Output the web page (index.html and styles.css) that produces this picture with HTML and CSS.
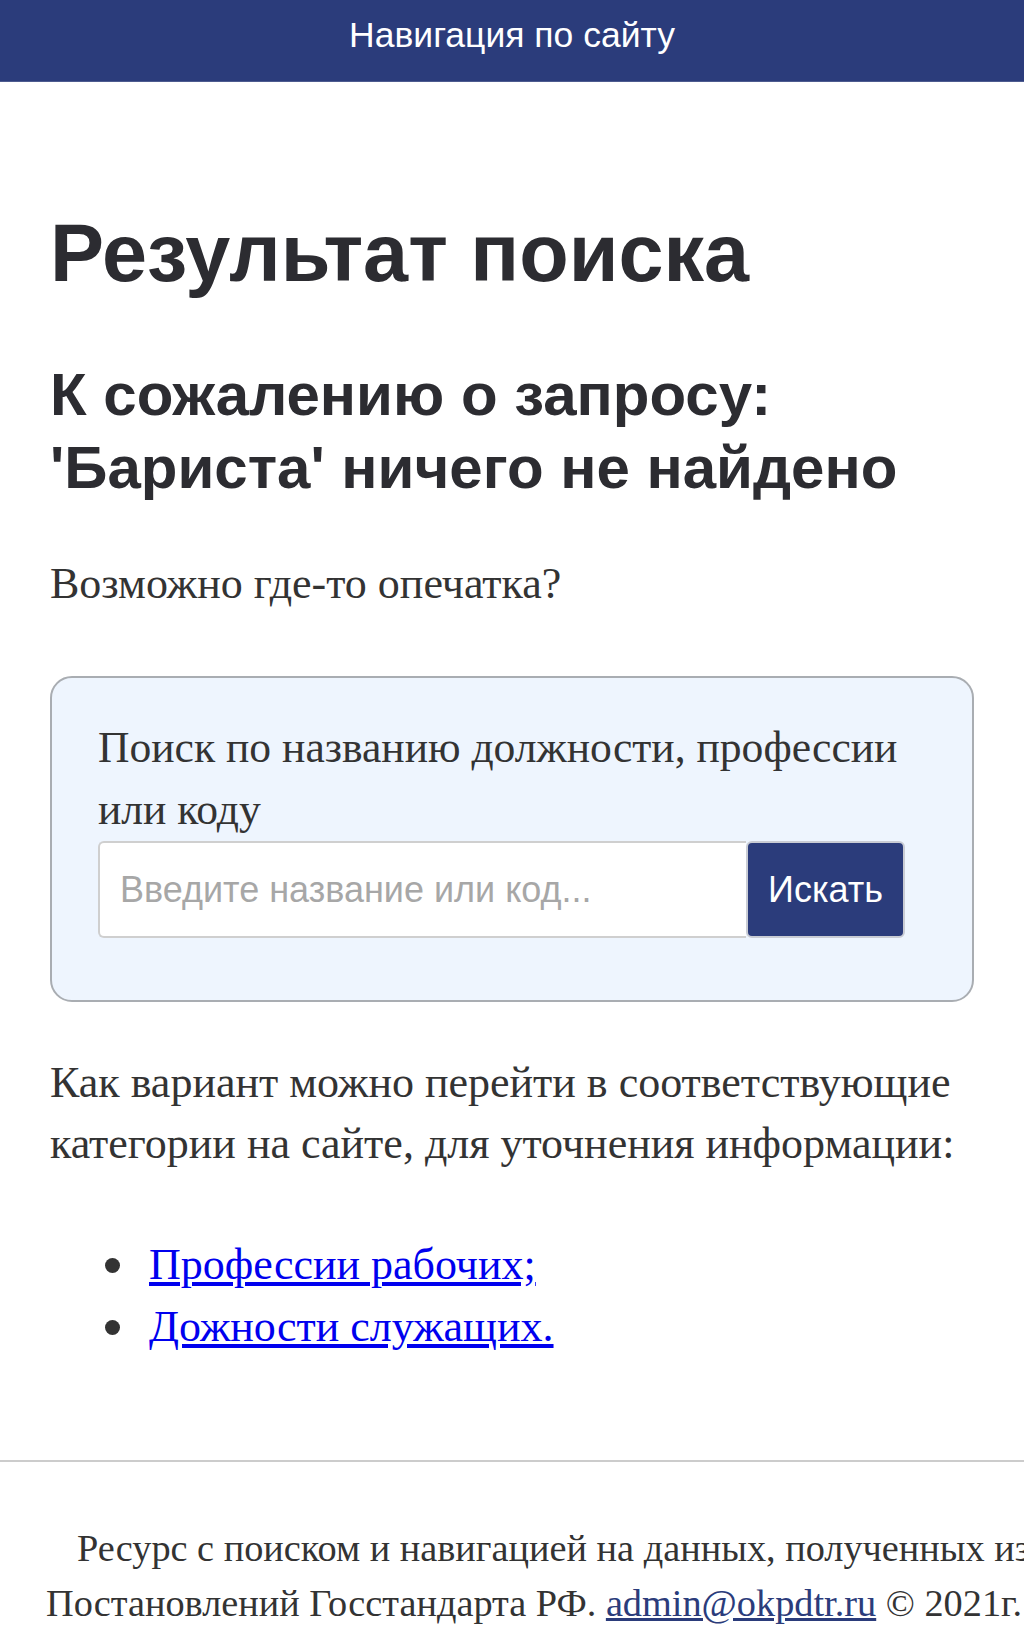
FILE: index.html
```html
<!DOCTYPE html>
<html lang="ru">
<head>
<meta charset="utf-8">
<title>Результат поиска</title>
<link rel="stylesheet" href="styles.css">
</head>
<body>
<header class="nav">Навигация по сайту</header>
<main class="content">
  <h1 class="title">Результат поиска</h1>
  <h2 class="subtitle">К сожалению о запросу:<br>'Бариста' ничего не найдено</h2>
  <p class="text">Возможно где-то опечатка?</p>
  <form class="search-box">
    <label class="search-label" for="q">Поиск по названию должности, профессии или коду</label>
    <div class="search-row">
      <input id="q" class="search-input" type="text" placeholder="Введите название или код...">
      <button class="search-btn" type="button">Искать</button>
    </div>
  </form>
  <p class="text text-after">Как вариант можно перейти в соответствующие категории на сайте, для уточнения информации:</p>
  <ul class="links">
    <li><a href="#">Профессии рабочих;</a></li>
    <li><a href="#">Дожности служащих.</a></li>
  </ul>
</main>
<footer class="footer">
  <p class="footer-text">Ресурс с поиском и навигацией на данных, полученных из Постановлений Госстандарта РФ. <a class="footer-link" href="#">admin@okpdtr.ru</a> © 2021г.</p>
</footer>
</body>
</html>
```

FILE: styles.css
```css
html, body {
  margin: 0;
  padding: 0;
  overflow-x: hidden;
  background: #ffffff;
}
body {
  font-family: "Liberation Serif", serif;
  color: #333333;
}
.nav {
  background: #2b3c7b;
  color: #ffffff;
  font-family: "Liberation Sans", Arial, sans-serif;
  font-size: 35.5px;
  line-height: 48px;
  text-align: center;
  padding: 11px 0 22px;
  border-bottom: 1px solid #4d5b8f;
  box-sizing: border-box;
  height: 82px;
}
.content {
  padding: 0 50px;
}
.title {
  font-family: "Liberation Sans", Arial, sans-serif;
  font-weight: bold;
  font-size: 81px;
  line-height: 92px;
  color: #2c2c31;
  margin: 125px 0 0;
}
.subtitle {
  font-family: "Liberation Sans", Arial, sans-serif;
  font-weight: bold;
  font-size: 60px;
  line-height: 73px;
  color: #2c2c31;
  margin: 59px 0 0;
}
.text {
  font-size: 44px;
  line-height: 61px;
  margin: 49px 0 0;
}
.search-box {
  margin: 62px 0 0;
  background: #eef5fe;
  border: 2px solid #a9adb2;
  border-radius: 22px;
  padding: 38px 46px 62px;
}
.search-label {
  display: block;
  font-size: 43.6px;
  line-height: 62px;
  color: #333333;
}
.search-row {
  display: flex;
  margin-top: 1px;
}
.search-input {
  width: 648px;
  height: 97px;
  box-sizing: border-box;
  border: 2px solid #cfcfcf;
  border-right: none;
  border-radius: 6px 0 0 6px;
  background: #ffffff;
  padding: 0 20px;
  font-family: "Liberation Sans", Arial, sans-serif;
  font-size: 36px;
  color: #333;
  outline: none;
}
.search-input::placeholder {
  color: #a7a7a7;
}
.search-btn {
  width: 159px;
  height: 97px;
  box-sizing: border-box;
  border: 2px solid #c9ccd4;
  border-radius: 6px;
  background: #2b3c7b;
  color: #ffffff;
  font-family: "Liberation Sans", Arial, sans-serif;
  font-size: 36px;
  padding: 0;
  cursor: pointer;
}
.text-after {
  margin-top: 50px;
}
.links {
  margin: 60px 0 0;
  padding-left: 55px;
  list-style: none;
  font-size: 44px;
  line-height: 62px;
  color: #333;
}
.links li::before {
  content: "";
  display: inline-block;
  width: 15px;
  height: 15px;
  border-radius: 50%;
  background: #333333;
  margin-right: 29px;
  vertical-align: middle;
  position: relative;
  top: -3px;
}
.links a {
  color: #0000ee;
}
.footer {
  margin-top: 102px;
  border-top: 2px solid #cccccc;
  padding-top: 59px;
  padding-bottom: 20px;
}
.footer-text {
  margin: 0 0 0 46px;
  width: 1000px;
  text-indent: 31px;
  font-size: 38.3px;
  line-height: 55px;
  color: #333;
}
.footer-link {
  color: #2b3c7b;
}
```
